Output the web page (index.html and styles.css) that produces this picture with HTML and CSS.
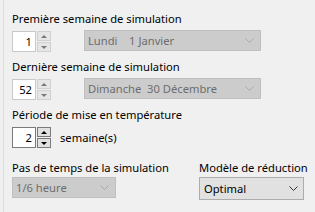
FILE: index.html
```html
<!DOCTYPE html>
<html lang="fr">
<head>
    <meta charset="UTF-8">
    <title>Paramètres de simulation</title>
    <link rel="stylesheet" href="styles.css">
</head>
<body>
    <div class="panel">
        <div class="label first">Première semaine de simulation</div>
        <div class="row">
            <div class="spin">
                <div class="spin-box">1</div>
                <div class="spin-btns">
                    <span class="up"></span>
                    <span class="down"></span>
                </div>
            </div>
            <div class="combo disabled wide">
                <span>Lundi&nbsp;&nbsp;&nbsp;&nbsp;1 Janvier</span>
                <svg class="chev" width="9" height="5" viewBox="0 0 9 5"><path d="M0.5 0.5 L4.5 4.5 L8.5 0.5" fill="none" stroke="currentColor"/></svg>
            </div>
        </div>

        <div class="label">Dernière semaine de simulation</div>
        <div class="row">
            <div class="spin">
                <div class="spin-box">52</div>
                <div class="spin-btns">
                    <span class="up"></span>
                    <span class="down"></span>
                </div>
            </div>
            <div class="combo disabled wide">
                <span>Dimanche&nbsp;&nbsp;30 Décembre</span>
                <svg class="chev" width="9" height="5" viewBox="0 0 9 5"><path d="M0.5 0.5 L4.5 4.5 L8.5 0.5" fill="none" stroke="currentColor"/></svg>
            </div>
        </div>

        <div class="label">Période de mise en température</div>
        <div class="row">
            <div class="spin focus">
                <div class="spin-box">2</div>
                <div class="spin-btns">
                    <span class="up"></span>
                    <span class="down"></span>
                </div>
            </div>
            <span class="unit">semaine(s)</span>
        </div>

        <div class="bottom">
            <div class="col left">
                <div class="label">Pas de temps de la simulation</div>
                <div class="combo disabled small">
                    <span>1/6 heure</span>
                    <svg class="chev" width="9" height="5" viewBox="0 0 9 5"><path d="M0.5 0.5 L4.5 4.5 L8.5 0.5" fill="none" stroke="currentColor"/></svg>
                </div>
            </div>
            <div class="col">
                <div class="label">Modèle de réduction</div>
                <div class="combo active">
                    <span>Optimal</span>
                    <svg class="chev" width="9" height="5" viewBox="0 0 9 5"><path d="M0.5 0.5 L4.5 4.5 L8.5 0.5" fill="none" stroke="currentColor"/></svg>
                </div>
            </div>
        </div>
    </div>
</body>
</html>
```

FILE: styles.css
```css
* {
    margin: 0;
    padding: 0;
    box-sizing: border-box;
}

body {
    background: #f0f0f0;
    font-family: 'Noto Sans', 'Open Sans', sans-serif;
    font-size: 11.2px;
    color: #000;
    width: 315px;
    height: 212px;
    overflow: hidden;
}

.panel {
    margin-left: 3px;
    border-left: 1px solid #dcdcdc;
    height: 212px;
    padding-left: 8px;
    padding-top: 11px;
}

.label {
    line-height: 15px;
    height: 15px;
    white-space: nowrap;
    margin-top: 7px;
}

.label.first {
    margin-top: 0;
}

.row {
    display: flex;
    align-items: flex-start;
    margin-top: 4px;
}

.spin {
    display: flex;
    margin-top: 1px;
}

.spin-box {
    width: 24px;
    height: 21px;
    background: #fff;
    border: 1px solid #c8c8c8;
    text-align: right;
    padding-right: 3px;
    line-height: 19px;
}

.spin-btns {
    display: flex;
    flex-direction: column;
    margin-left: 1px;
    width: 14px;
    height: 21px;
    gap: 1px;
}

.spin-btns span {
    flex: 1;
    background: #e6e6e6;
    border: 1px solid #d0d0d0;
    position: relative;
}

.spin-btns span::after {
    content: '';
    position: absolute;
    left: 3px;
    border-left: 3px solid transparent;
    border-right: 3px solid transparent;
}

.spin-btns .up::after {
    top: 3px;
    border-bottom: 3px solid #7a7a7a;
}

.spin-btns .down::after {
    top: 3px;
    border-top: 3px solid #7a7a7a;
}

.spin.focus .spin-box {
    border-color: #7a7a7a;
}

.spin.focus .spin-btns span {
    border-color: #7a7a7a;
    background: #e1e1e1;
}

.spin.focus .spin-btns span::after {
    border-bottom-color: #000;
    border-top-color: #000;
}

.combo {
    height: 21px;
    display: flex;
    align-items: center;
    justify-content: space-between;
    padding: 0 6px 0 3px;
    white-space: nowrap;
}

.combo.disabled {
    background: #cccccc;
    border: 1px solid #bfbfbf;
    color: #6d6d6d;
}

.combo.disabled .chev {
    color: #a8a8a8;
}

.combo.wide {
    width: 177px;
    margin-left: 33px;
}

.combo.small {
    width: 104px;
}

.combo.active {
    width: 105px;
    height: 23px;
    background: #e1e1e1;
    border: 1px solid #adadad;
    padding-left: 4px;
    padding-right: 5px;
}

.combo.active .chev {
    color: #333;
}

.unit {
    margin-left: 9px;
    line-height: 21px;
    margin-top: 1px;
}

.bottom {
    display: flex;
    margin-top: 5px;
}

.bottom .label {
    margin-top: 7px;
    margin-bottom: 2px;
}

.col.left {
    width: 187px;
    flex: none;
}
```
